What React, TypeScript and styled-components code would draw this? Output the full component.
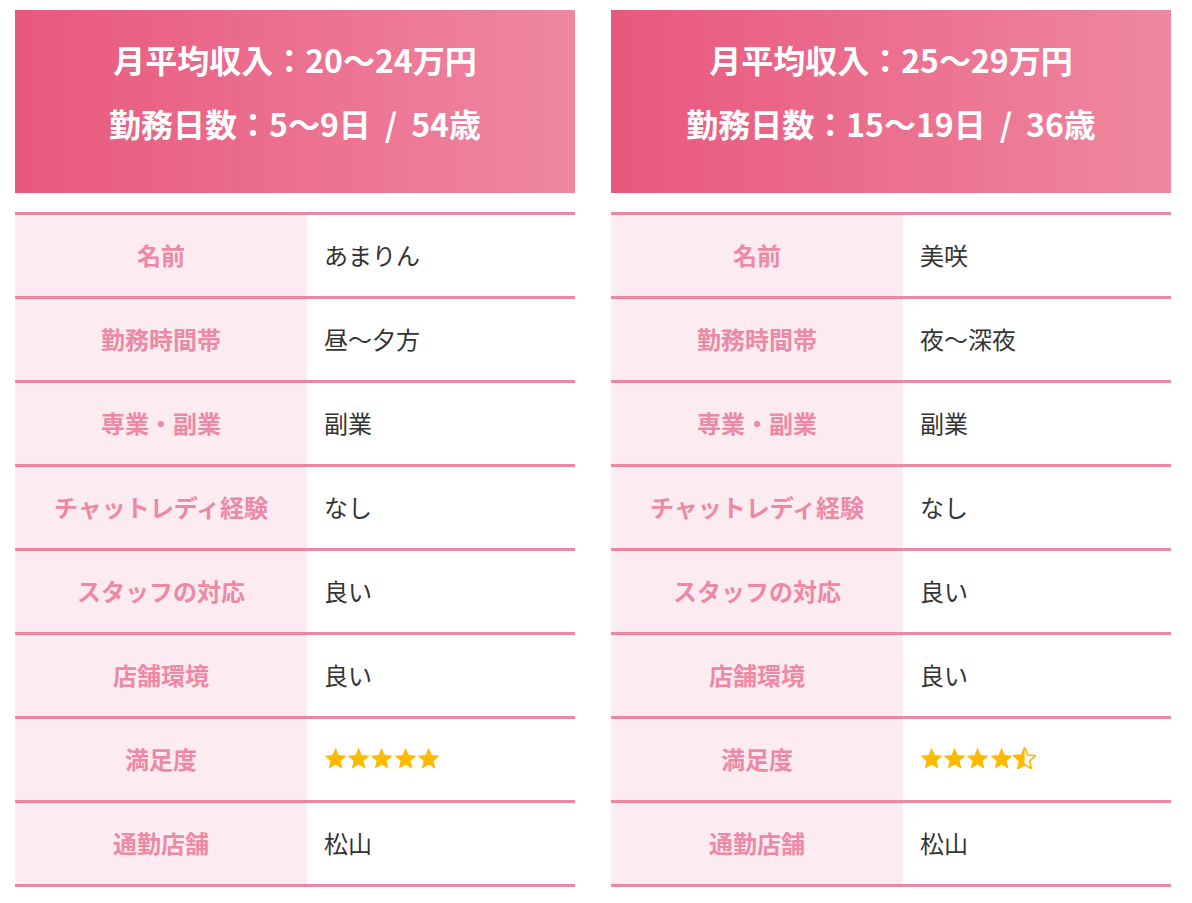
import React from "react";
import styled, { createGlobalStyle } from "styled-components";

const GlobalStyle = createGlobalStyle`
  html, body {
    margin: 0;
    padding: 0;
    background: #ffffff;
  }
  body {
    font-family: "Noto Sans CJK JP", "Noto Sans", sans-serif;
  }
`;

const PINK_LINE = "#ec87a2";

const Page = styled.div`
  display: flex;
  gap: 36px;
  padding: 10px 0 0 15px;
`;

const Card = styled.section`
  width: 560px;
  display: flex;
  flex-direction: column;
`;

const Header = styled.div`
  background: linear-gradient(90deg, #e8587d 0%, #ef87a1 100%);
  color: #ffffff;
  text-align: center;
  font-weight: 700;
  font-size: 32px;
  line-height: 64px;
  padding: 17px 0 38px;
`;

const Slash = styled.span`
  margin: 0 14px;
`;

const Table = styled.div`
  margin-top: 19px;
  border-top: 3px solid ${PINK_LINE};
`;

const Row = styled.div`
  display: flex;
  height: 81px;
  border-bottom: 3px solid ${PINK_LINE};
`;

const Label = styled.div`
  width: 292px;
  flex-shrink: 0;
  background: #fcebf0;
  color: #ec89a5;
  font-weight: 700;
  font-size: 24px;
  display: flex;
  align-items: center;
  justify-content: center;
  padding-bottom: 2px;
`;

const Value = styled.div`
  flex: 1;
  display: flex;
  align-items: center;
  padding-left: 17px;
  padding-bottom: 2px;
  color: #333333;
  font-size: 24px;
`;

const Stars = styled.div`
  display: flex;
  margin-top: -2px;
`;

type StarKind = "full" | "half";

const STAR_D =
  "M12 1.8l2.9 6.9 7.4.6-5.6 4.9 1.7 7.3L12 17.6l-6.4 3.9 1.7-7.3L1.7 9.3l7.4-.6z";

const Star: React.FC<{ kind: StarKind; id: string }> = ({ kind, id }) => (
  <svg width="23.2" height="22" viewBox="1.2 1.2 21.6 20.6">
    {kind === "half" && (
      <defs>
        <clipPath id={id}>
          <rect x="0" y="0" width="12" height="24" />
        </clipPath>
      </defs>
    )}
    {kind === "full" ? (
      <path d={STAR_D} fill="#ffb900" />
    ) : (
      <>
        <path
          d={STAR_D}
          fill="none"
          stroke="#ffb900"
          strokeWidth="1.6"
          strokeLinejoin="round"
        />
        <path d={STAR_D} fill="#ffb900" clipPath={`url(#${id})`} />
      </>
    )}
  </svg>
);

interface CardData {
  income: string;
  days: string;
  age: string;
  name: string;
  time: string;
  stars: number;
}

const cards: CardData[] = [
  {
    income: "月平均収入：20〜24万円",
    days: "勤務日数：5〜9日",
    age: "54歳",
    name: "あまりん",
    time: "昼〜夕方",
    stars: 5,
  },
  {
    income: "月平均収入：25〜29万円",
    days: "勤務日数：15〜19日",
    age: "36歳",
    name: "美咲",
    time: "夜〜深夜",
    stars: 4.5,
  },
];

const Rating: React.FC<{ value: number; prefix: string }> = ({ value, prefix }) => {
  const list: StarKind[] = [];
  for (let i = 1; i <= 5; i++) {
    if (value >= i) list.push("full");
    else if (value >= i - 0.5) list.push("half");
  }
  return (
    <Stars>
      {list.map((k, i) => (
        <Star key={i} kind={k} id={`${prefix}-star-${i}`} />
      ))}
    </Stars>
  );
};

const App: React.FC = () => {
  return (
    <>
      <GlobalStyle />
      <Page>
        {cards.map((c, idx) => {
          const rows: [string, React.ReactNode][] = [
            ["名前", c.name],
            ["勤務時間帯", c.time],
            ["専業・副業", "副業"],
            ["チャットレディ経験", "なし"],
            ["スタッフの対応", "良い"],
            ["店舗環境", "良い"],
            ["満足度", <Rating value={c.stars} prefix={`c${idx}`} />],
            ["通勤店舗", "松山"],
          ];
          return (
            <Card key={idx}>
              <Header>
                <div>{c.income}</div>
                <div>
                  {c.days}
                  <Slash>/</Slash>
                  {c.age}
                </div>
              </Header>
              <Table>
                {rows.map(([label, value]) => (
                  <Row key={label}>
                    <Label>{label}</Label>
                    <Value>{value}</Value>
                  </Row>
                ))}
              </Table>
            </Card>
          );
        })}
      </Page>
    </>
  );
};

export default App;
